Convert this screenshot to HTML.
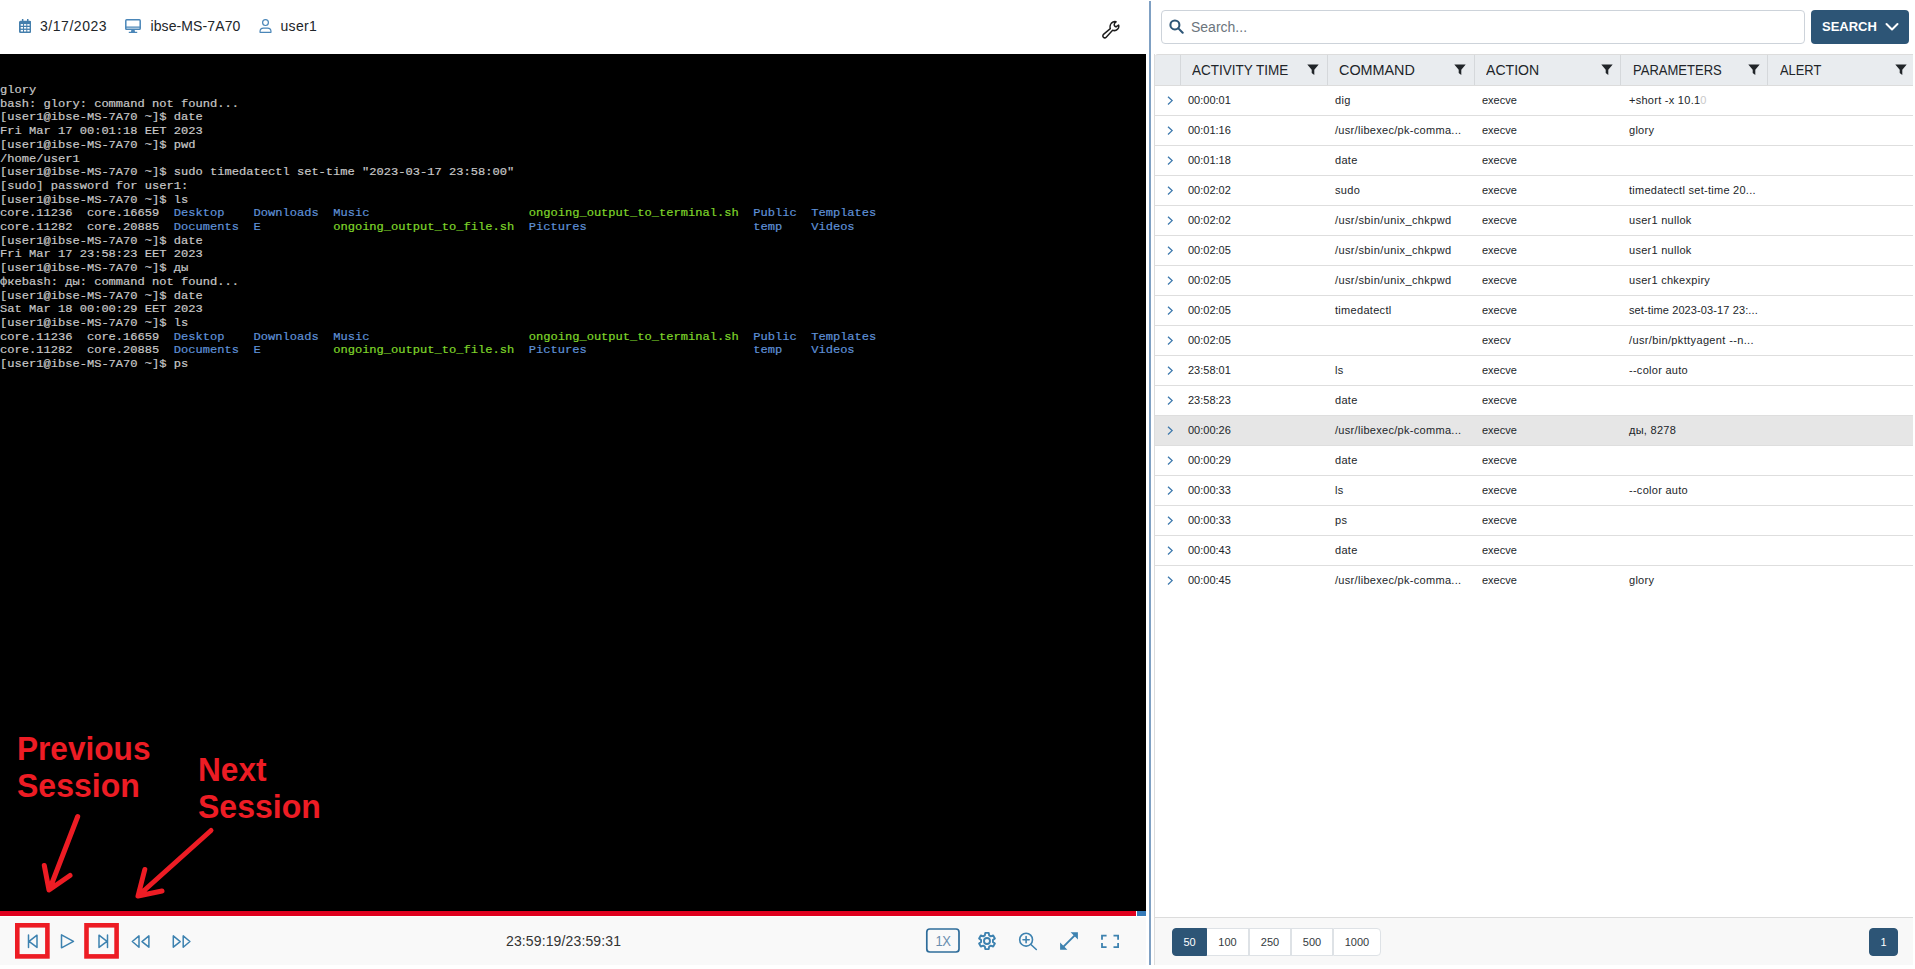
<!DOCTYPE html>
<html>
<head>
<meta charset="utf-8">
<title>Session Player</title>
<style>
*{box-sizing:border-box;margin:0;padding:0}
html,body{width:1915px;height:969px;overflow:hidden;background:#fff;font-family:"Liberation Sans",sans-serif;color:#212529}
.abs{position:absolute}
#left{position:absolute;left:0;top:0;width:1146px;height:969px;background:#fff}
#tophdr{position:absolute;left:0;top:0;width:1146px;height:54px;background:#fff}
#tophdr .t{position:absolute;top:17px;font-size:14px;line-height:18px;color:#212529;white-space:nowrap}
#term{position:absolute;left:0;top:54px;width:1146px;height:857px;background:#000;overflow:hidden}
#term pre{position:absolute;left:-0.2px;top:30px;font-family:"Liberation Mono",monospace;font-size:10px;line-height:13.7px;color:#c8c8c8;font-weight:normal;-webkit-text-stroke:0.18px currentColor;white-space:pre;transform:scaleX(1.2067);transform-origin:0 0}
#term .b{color:#5f91d8}
#term .g{color:#7fd62a}
#prog{position:absolute;left:0;top:911px;width:1136px;height:5px;background:#e0001e}
#progend{position:absolute;left:1137px;top:911px;width:9px;height:5px;background:#357ab8}
#ctrl{position:absolute;left:0;top:917px;width:1146px;height:48px;background:#f9f9f9}
.anno{position:absolute;font-family:"Liberation Sans",sans-serif;font-weight:bold;font-size:31.600px;line-height:37px;color:#ed1c24;white-space:nowrap}
.al{display:inline-block;transform:scaleY(1.04);transform-origin:0 78%}
.rbox{position:absolute;border:4px solid #ed1c24;width:35px;height:36px;top:923px}
#divider{position:absolute;left:1149px;top:1px;width:2px;height:964px;background:#7fa0c3}
#right{position:absolute;left:1154px;top:0;width:761px;height:969px;background:#fff}
#search{position:absolute;left:1161px;top:10px;width:644px;height:34px;border:1px solid #cdd3da;border-radius:4px;background:#fff}
#search .ph{position:absolute;left:29px;top:7px;font-size:14px;line-height:18px;color:#6c757d}
#sbtn{position:absolute;left:1811px;top:10px;width:98px;height:34px;border-radius:4px;background:#2d5576;color:#fff;font-weight:bold;font-size:13px;line-height:34px}
#sbtn span{position:absolute;left:11px;top:0}
#grid{position:absolute;left:1154px;top:54px;width:759px;height:911px;border-left:1px solid #dcdcdc}
#ghead{position:absolute;left:0;top:0;width:758px;height:32px;background:#e9ecef;border-top:1px solid #dcdcdc;border-bottom:1px solid #dcdcdc;border-radius:3px 0 0 0}
#ghead .sep{position:absolute;top:0;width:1px;height:30px;background:#d5d8db}
#ghead .h{position:absolute;top:0px;height:30px;font-size:14px;line-height:30px;color:#212529;padding-left:10px;white-space:nowrap}
#ghead .h span{display:inline-block;transform-origin:0 50%}
#ghead svg{position:absolute;top:9px}
.row{position:absolute;left:0;width:758px;height:30px;border-bottom:1px solid #dedede;font-size:11px;line-height:29px;color:#212529}
.row.sel{background:#e6e6e6}
.row.last{border-bottom:none}
.row span{position:absolute;top:0;white-space:nowrap}
.row svg{position:absolute;left:12px;top:10px}
#pager{position:absolute;left:1155px;top:917px;width:758px;height:48px;background:#f8f8f8;border-top:1px solid #dcdcdc}
.pg{position:absolute;top:10px;height:28px;font-size:11px;line-height:27px;text-align:center;color:#343a40;background:#fff;border:1px solid #dee2e6}
.pg.on{background:#2d5576;color:#fff;border-color:#2d5576}
</style>
</head>
<body>
<div id="left">
  <div id="tophdr">
    <svg class="abs" style="left:19px;top:19px" width="12.300" height="14" viewBox="0 0 12.300 14"><path fill="#447fad" d="M2.900 0h1.500v1.800h3.600V0h1.500v1.800h1.300a1.500 1.500 0 0 1 1.500 1.500v9.200a1.500 1.500 0 0 1-1.500 1.500H1.500A1.500 1.500 0 0 1 0 12.500V3.300a1.500 1.500 0 0 1 1.500-1.500h1.400z"/><g fill="#fff"><rect x="1.700" y="5.100" width="2.300" height="1.600"/><rect x="5" y="5.100" width="2.300" height="1.600"/><rect x="8.300" y="5.100" width="2.300" height="1.600"/><rect x="1.700" y="8" width="2.300" height="1.600"/><rect x="5" y="8" width="2.300" height="1.600"/><rect x="8.300" y="8" width="2.300" height="1.600"/><rect x="1.700" y="10.900" width="2.300" height="1.600"/><rect x="5" y="10.900" width="2.300" height="1.600"/><rect x="8.300" y="10.900" width="2.300" height="1.600"/></g></svg>
    <div class="t" style="left:40px;letter-spacing:0.540px">3/17/2023</div>
    <svg class="abs" style="left:125.300px;top:18.800px" width="16" height="14.200" viewBox="0 0 576 512"><path fill="none" stroke="#4a86b8" stroke-width="54" stroke-linejoin="round" d="M60 28h456a32 32 0 0 1 32 32v282a32 32 0 0 1-32 32H60a32 32 0 0 1-32-32V60a32 32 0 0 1 32-32z"/><path fill="#4a86b8" d="M28 272h520v44H28zM228 396h120l14 72h-148zM136 462h304v50H136z"/></svg>
    <div class="t" style="left:150.500px;letter-spacing:0.100px">ibse-MS-7A70</div>
    <svg class="abs" style="left:259px;top:19px" width="13" height="14" viewBox="0 0 448 512"><g fill="none" stroke="#4a86b8" stroke-width="44"><circle cx="224" cy="132" r="106"/><path stroke-linejoin="round" d="M24 488v-30c0-70 56-126 126-126h148c70 0 126 56 126 126v30z"/></g></svg>
    <div class="t" style="left:280.500px;letter-spacing:0.300px">user1</div>
    <svg class="abs" style="left:1102.100px;top:19.500px" width="18" height="19.500" viewBox="0 0 18 18" preserveAspectRatio="none"><path fill="none" stroke="#1d1d1d" stroke-width="1.500" stroke-linecap="round" stroke-linejoin="round" d="M8.300 7.900C7.600 5.600 8.600 2.900 11 1.900C12 1.500 13.200 1.400 14 1.700C12.600 2.600 12 3.600 12.300 4.800C12.600 5.900 13.700 6.300 14.700 5.900L16.600 4.700C17 6 16.600 7.600 15.600 8.500C14.300 9.700 12.300 10 10.600 9.500L4.200 15.900C3.400 16.700 2.200 16.700 1.400 15.900C0.600 15.100 0.700 14 1.500 13.300z"/></svg>
  </div>
  <div id="term"><pre>glory
bash: glory: command not found...
[user1@ibse-MS-7A70 ~]$ date
Fri Mar 17 00:01:18 EET 2023
[user1@ibse-MS-7A70 ~]$ pwd
/home/user1
[user1@ibse-MS-7A70 ~]$ sudo timedatectl set-time "2023-03-17 23:58:00"
[sudo] password for user1:
[user1@ibse-MS-7A70 ~]$ ls
core.11236  core.16659  <span class="b">Desktop</span>    <span class="b">Downloads</span>  <span class="b">Music</span>                      <span class="g">ongoing_output_to_terminal.sh</span>  <span class="b">Public</span>  <span class="b">Templates</span>
core.11282  core.20885  <span class="b">Documents</span>  <span class="b">E</span>          <span class="g">ongoing_output_to_file.sh</span>  <span class="b">Pictures</span>                       <span class="b">temp</span>    <span class="b">Videos</span>
[user1@ibse-MS-7A70 ~]$ date
Fri Mar 17 23:58:23 EET 2023
[user1@ibse-MS-7A70 ~]$ ды
фкеbash: ды: command not found...
[user1@ibse-MS-7A70 ~]$ date
Sat Mar 18 00:00:29 EET 2023
[user1@ibse-MS-7A70 ~]$ ls
core.11236  core.16659  <span class="b">Desktop</span>    <span class="b">Downloads</span>  <span class="b">Music</span>                      <span class="g">ongoing_output_to_terminal.sh</span>  <span class="b">Public</span>  <span class="b">Templates</span>
core.11282  core.20885  <span class="b">Documents</span>  <span class="b">E</span>          <span class="g">ongoing_output_to_file.sh</span>  <span class="b">Pictures</span>                       <span class="b">temp</span>    <span class="b">Videos</span>
[user1@ibse-MS-7A70 ~]$ ps</pre></div>
  <div id="prog"></div><div id="progend"></div>
  <div id="ctrl"></div>
  <svg class="abs" style="left:0;top:916px" width="1146" height="53" viewBox="0 916 1146 53">
    <g fill="none" stroke="#3d82b0" stroke-width="1.500" stroke-linejoin="round" stroke-linecap="round">
      <path d="M28.500 935v12.500M37 935.200v12.200l-8-6.100z"/>
      <path d="M61.500 934.800v13l12-6.500z"/>
      <path d="M107.500 935v12.500M99 935.200v12.200l8-6.100z"/>
      <path d="M139 935.900v11.300l-6.700-5.650zM148.900 935.900v11.300l-6.900-5.650z"/>
      <path d="M173.300 935.900v11.300l6.900-5.650zM183.200 935.900v11.300l6.700-5.650z"/>
      <rect x="926.800" y="929" width="32.200" height="23" rx="3" stroke="#2f6d9b" stroke-width="1.700"/>
    </g>
  </svg>
  <div class="abs" style="left:506px;top:932px;font-size:14px;line-height:18px;letter-spacing:0.13px;color:#333">23:59:19/23:59:31</div>
  <div class="abs" style="left:935.500px;top:932.500px;font-size:13px;line-height:18px;color:#6a8eb0;letter-spacing:-0.4px;transform:scaleY(1.08)">1X</div>
  <svg class="abs" style="left:977px;top:930.800px" width="20" height="20" viewBox="0 0 20 20"><g fill="none" stroke="#3d82b0" stroke-width="1.900" stroke-linejoin="round"><circle cx="10" cy="10" r="3"/><path d="M7.85 4.40L8.27 1.880L11.730 1.880L12.150 4.400L13.780 5.340L16.170 4.450L17.890 7.440L15.930 9.060L15.930 10.940L17.890 12.560L16.170 15.550L13.780 14.660L12.150 15.600L11.730 18.120L8.270 18.120L7.850 15.600L6.220 14.660L3.830 15.550L2.110 12.560L4.070 10.940L4.070 9.060L2.110 7.440L3.830 4.450L6.220 5.340z"/></g></svg>
  <svg class="abs" style="left:1018px;top:931px" width="20" height="20" viewBox="0 0 20 20"><g fill="none" stroke="#3d82b0" stroke-width="1.600" stroke-linecap="round"><circle cx="8.100" cy="8.700" r="6.400"/><path d="M12.900 13.500l5.400 5M5 8.700h6.200M8.100 5.600v6.200"/></g></svg>
  <svg class="abs" style="left:1059px;top:931px" width="20" height="20" viewBox="0 0 20 20"><g fill="none" stroke="#3d82b0" stroke-width="2" stroke-linecap="butt"><path d="M4.500 15.600L15.500 4.600"/></g><path fill="#3d82b0" d="M11.600 1.300h7.300v7.300zM1.100 11.500v7.300h7.300z"/></svg>
  <svg class="abs" style="left:1100px;top:931px" width="20" height="20" viewBox="0 0 20 20"><g fill="none" stroke="#3d82b0" stroke-width="1.800"><path d="M2 8.800V4.700h4.600M13.500 4.700h4.600v4.100M18.100 12v4.100h-4.600M6.600 16.100H2v-4.100"/></g></svg>
  <svg class="abs" style="left:0;top:916px" width="140" height="53" viewBox="0 916 140 53"><g fill="none" stroke="#ed1c24" stroke-width="4.600"><rect x="17.300" y="925.300" width="30.100" height="31.100"/><rect x="86.500" y="925.300" width="30.100" height="31.100"/></g></svg>
  <div class="anno" style="left:17px;top:731px"><span class="al">Previous</span><br><span class="al" style="font-size:32px">Session</span></div>
  <div class="anno" style="left:198px;top:752px"><span class="al">Next</span><br><span class="al" style="font-size:32px">Session</span></div>
  <svg class="abs" style="left:0;top:800px" width="260" height="111" viewBox="0 800 260 111"><g fill="none" stroke="#ed1c24" stroke-width="5" stroke-linecap="round" stroke-linejoin="round"><path d="M77.700 816.500L49.500 889.500M44.300 865.500L49 890L70 875.500"/><path d="M211 830.500L138.500 895.500M144.800 869.500L138 896L162 891"/></g></svg>
</div>
<div id="divider"></div>
<div id="right"></div>
<div id="search"><svg class="abs" style="left:7px;top:8px" width="15" height="15" viewBox="0 0 16 16"><g fill="none" stroke="#2d5576" stroke-width="2.200" stroke-linecap="round"><circle cx="6.300" cy="6.300" r="4.800"/><path d="M10 10l4.600 4.600"/></g></svg><div class="ph">Search...</div></div>
<div id="sbtn"><span>SEARCH</span><svg class="abs" style="left:74px;top:12px" width="14" height="10" viewBox="0 0 14 10"><path fill="none" stroke="#fff" stroke-width="2" stroke-linecap="round" stroke-linejoin="round" d="M1.500 2l5.500 5.500L12.500 2"/></svg></div>
<div id="grid"><div id="ghead"><div class="sep" style="left:25px"></div><div class="sep" style="left:172px"></div><div class="sep" style="left:319px"></div><div class="sep" style="left:465px"></div><div class="sep" style="left:612px"></div><div class="h" style="left:27px;width:147px"><span style="transform:scaleX(0.964)">ACTIVITY TIME</span></div><svg style="left:152px" width="12" height="12" viewBox="0 0 12 12"><path fill="#212529" d="M0.300 0.500h11.400L7.300 5.800V11L4.700 9V5.800z"/></svg><div class="h" style="left:174px;width:147px"><span style="transform:scaleX(1.027)">COMMAND</span></div><svg style="left:299px" width="12" height="12" viewBox="0 0 12 12"><path fill="#212529" d="M0.300 0.500h11.400L7.300 5.800V11L4.700 9V5.800z"/></svg><div class="h" style="left:321px;width:147px"><span style="transform:scaleX(1.005)">ACTION</span></div><svg style="left:446px" width="12" height="12" viewBox="0 0 12 12"><path fill="#212529" d="M0.300 0.500h11.400L7.300 5.800V11L4.700 9V5.800z"/></svg><div class="h" style="left:468px;width:147px"><span style="transform:scaleX(0.93)">PARAMETERS</span></div><svg style="left:593px" width="12" height="12" viewBox="0 0 12 12"><path fill="#212529" d="M0.300 0.500h11.400L7.300 5.800V11L4.700 9V5.800z"/></svg><div class="h" style="left:615px;width:147px"><span style="transform:scaleX(0.92)">ALERT</span></div><svg style="left:740px" width="12" height="12" viewBox="0 0 12 12"><path fill="#212529" d="M0.300 0.500h11.400L7.300 5.800V11L4.700 9V5.800z"/></svg></div><div class="row" style="top:32px"><svg width="7" height="10" viewBox="0 0 7 10"><path fill="none" stroke="#3d79ad" stroke-width="1.300" d="M1 0.700l4.100 3.900L1 8.500"/></svg><span style="left:33px">00:00:01</span><span style="left:180px;letter-spacing:0.3px">dig</span><span style="left:327px">execve</span><span style="left:474px;letter-spacing:0.27px">+short -x 10.1<span style="position:static;color:#c9c9c9">0</span></span></div>
<div class="row" style="top:62px"><svg width="7" height="10" viewBox="0 0 7 10"><path fill="none" stroke="#3d79ad" stroke-width="1.300" d="M1 0.700l4.100 3.900L1 8.500"/></svg><span style="left:33px">00:01:16</span><span style="left:180px;letter-spacing:0.3px">/usr/libexec/pk-comma...</span><span style="left:327px">execve</span><span style="left:474px;letter-spacing:0.27px">glory</span></div>
<div class="row" style="top:92px"><svg width="7" height="10" viewBox="0 0 7 10"><path fill="none" stroke="#3d79ad" stroke-width="1.300" d="M1 0.700l4.100 3.900L1 8.500"/></svg><span style="left:33px">00:01:18</span><span style="left:180px;letter-spacing:0.3px">date</span><span style="left:327px">execve</span><span style="left:474px"></span></div>
<div class="row" style="top:122px"><svg width="7" height="10" viewBox="0 0 7 10"><path fill="none" stroke="#3d79ad" stroke-width="1.300" d="M1 0.700l4.100 3.900L1 8.500"/></svg><span style="left:33px">00:02:02</span><span style="left:180px;letter-spacing:0.3px">sudo</span><span style="left:327px">execve</span><span style="left:474px;letter-spacing:0.27px">timedatectl set-time 20...</span></div>
<div class="row" style="top:152px"><svg width="7" height="10" viewBox="0 0 7 10"><path fill="none" stroke="#3d79ad" stroke-width="1.300" d="M1 0.700l4.100 3.900L1 8.500"/></svg><span style="left:33px">00:02:02</span><span style="left:180px;letter-spacing:0.4px">/usr/sbin/unix_chkpwd</span><span style="left:327px">execve</span><span style="left:474px;letter-spacing:0.27px">user1 nullok</span></div>
<div class="row" style="top:182px"><svg width="7" height="10" viewBox="0 0 7 10"><path fill="none" stroke="#3d79ad" stroke-width="1.300" d="M1 0.700l4.100 3.900L1 8.500"/></svg><span style="left:33px">00:02:05</span><span style="left:180px;letter-spacing:0.4px">/usr/sbin/unix_chkpwd</span><span style="left:327px">execve</span><span style="left:474px;letter-spacing:0.27px">user1 nullok</span></div>
<div class="row" style="top:212px"><svg width="7" height="10" viewBox="0 0 7 10"><path fill="none" stroke="#3d79ad" stroke-width="1.300" d="M1 0.700l4.100 3.900L1 8.500"/></svg><span style="left:33px">00:02:05</span><span style="left:180px;letter-spacing:0.4px">/usr/sbin/unix_chkpwd</span><span style="left:327px">execve</span><span style="left:474px;letter-spacing:0.27px">user1 chkexpiry</span></div>
<div class="row" style="top:242px"><svg width="7" height="10" viewBox="0 0 7 10"><path fill="none" stroke="#3d79ad" stroke-width="1.300" d="M1 0.700l4.100 3.900L1 8.500"/></svg><span style="left:33px">00:02:05</span><span style="left:180px;letter-spacing:0.3px">timedatectl</span><span style="left:327px">execve</span><span style="left:474px;letter-spacing:0.11px">set-time 2023-03-17 23:...</span></div>
<div class="row" style="top:272px"><svg width="7" height="10" viewBox="0 0 7 10"><path fill="none" stroke="#3d79ad" stroke-width="1.300" d="M1 0.700l4.100 3.900L1 8.500"/></svg><span style="left:33px">00:02:05</span><span style="left:180px"></span><span style="left:327px">execv</span><span style="left:474px;letter-spacing:0.36px">/usr/bin/pkttyagent --n...</span></div>
<div class="row" style="top:302px"><svg width="7" height="10" viewBox="0 0 7 10"><path fill="none" stroke="#3d79ad" stroke-width="1.300" d="M1 0.700l4.100 3.900L1 8.500"/></svg><span style="left:33px">23:58:01</span><span style="left:180px;letter-spacing:0.3px">ls</span><span style="left:327px">execve</span><span style="left:474px;letter-spacing:0.27px">--color auto</span></div>
<div class="row" style="top:332px"><svg width="7" height="10" viewBox="0 0 7 10"><path fill="none" stroke="#3d79ad" stroke-width="1.300" d="M1 0.700l4.100 3.900L1 8.500"/></svg><span style="left:33px">23:58:23</span><span style="left:180px;letter-spacing:0.3px">date</span><span style="left:327px">execve</span><span style="left:474px"></span></div>
<div class="row sel" style="top:362px"><svg width="7" height="10" viewBox="0 0 7 10"><path fill="none" stroke="#3d79ad" stroke-width="1.300" d="M1 0.700l4.100 3.900L1 8.500"/></svg><span style="left:33px">00:00:26</span><span style="left:180px;letter-spacing:0.3px">/usr/libexec/pk-comma...</span><span style="left:327px">execve</span><span style="left:474px;letter-spacing:0.27px">ды, 8278</span></div>
<div class="row" style="top:392px"><svg width="7" height="10" viewBox="0 0 7 10"><path fill="none" stroke="#3d79ad" stroke-width="1.300" d="M1 0.700l4.100 3.900L1 8.500"/></svg><span style="left:33px">00:00:29</span><span style="left:180px;letter-spacing:0.3px">date</span><span style="left:327px">execve</span><span style="left:474px"></span></div>
<div class="row" style="top:422px"><svg width="7" height="10" viewBox="0 0 7 10"><path fill="none" stroke="#3d79ad" stroke-width="1.300" d="M1 0.700l4.100 3.900L1 8.500"/></svg><span style="left:33px">00:00:33</span><span style="left:180px;letter-spacing:0.3px">ls</span><span style="left:327px">execve</span><span style="left:474px;letter-spacing:0.27px">--color auto</span></div>
<div class="row" style="top:452px"><svg width="7" height="10" viewBox="0 0 7 10"><path fill="none" stroke="#3d79ad" stroke-width="1.300" d="M1 0.700l4.100 3.900L1 8.500"/></svg><span style="left:33px">00:00:33</span><span style="left:180px;letter-spacing:0.3px">ps</span><span style="left:327px">execve</span><span style="left:474px"></span></div>
<div class="row" style="top:482px"><svg width="7" height="10" viewBox="0 0 7 10"><path fill="none" stroke="#3d79ad" stroke-width="1.300" d="M1 0.700l4.100 3.900L1 8.500"/></svg><span style="left:33px">00:00:43</span><span style="left:180px;letter-spacing:0.3px">date</span><span style="left:327px">execve</span><span style="left:474px"></span></div>
<div class="row last" style="top:512px"><svg width="7" height="10" viewBox="0 0 7 10"><path fill="none" stroke="#3d79ad" stroke-width="1.300" d="M1 0.700l4.100 3.900L1 8.500"/></svg><span style="left:33px">00:00:45</span><span style="left:180px;letter-spacing:0.3px">/usr/libexec/pk-comma...</span><span style="left:327px">execve</span><span style="left:474px;letter-spacing:0.27px">glory</span></div>
</div>
<div id="pager">
<div class="pg on" style="left:17px;width:35px;border-radius:4px 0 0 4px">50</div>
<div class="pg" style="left:52px;width:42px;border-left:none">100</div>
<div class="pg" style="left:94px;width:42px">250</div>
<div class="pg" style="left:136px;width:42px">500</div>
<div class="pg" style="left:178px;width:48px;border-radius:0 4px 4px 0">1000</div>
<div class="pg on" style="left:714px;width:29px;border-radius:4px">1</div>
</div>
</body>
</html>
